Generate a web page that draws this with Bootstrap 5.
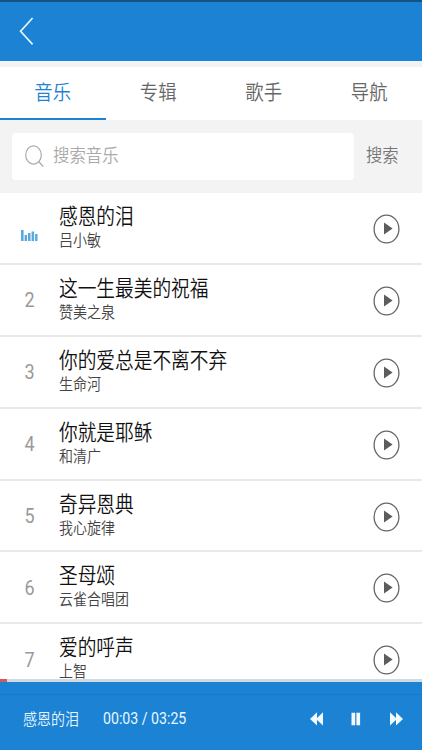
<!DOCTYPE html>
<html lang="zh-CN">
<head>
<meta charset="utf-8">
<meta name="viewport" content="width=device-width, initial-scale=1">
<title>音乐</title>
<link rel="stylesheet" href="https://cdn.jsdelivr.net/npm/bootstrap@5.3.0/dist/css/bootstrap.min.css">
<style>
:root { --blue: #1c82d3; --panel: #f3f3f3; }
body { font-family: Roboto, "Noto Sans CJK SC", sans-serif; font-weight: 350; background: #fff; color: #111; }
.screen { width: 422px; height: 750px; }
.tall { display: inline-block; transform: scaleY(1.13); white-space: nowrap; }
.topbar { height: 61px; background: var(--blue); border-top: 2px solid #14537f; padding-left: 19px; }
.tabs-wrap { background: var(--panel); padding-top: 6px; }
.tabs { height: 53px; background: #fff; }
.tabs .nav-link { height: 53px; padding: 0; line-height: 52px; font-size: 18.4px; font-weight: 350; color: #666; border-radius: 0; }
.tabs .nav-link.active { color: var(--blue); border-bottom: 2.5px solid var(--blue); }
.searchbar { height: 73px; background: var(--panel); padding: 0 12px; }
.searchbox { width: 342px; height: 47px; border-radius: 4px; color: #aaa; padding-left: 13px; font-size: 16.4px; }
.search-hint { margin-left: 9px; }
.search-go { font-size: 16.3px; color: #777; margin-left: 12px; }
.song { height: 71.9px; border-bottom: 2px solid #e9e9e9; }
.num { width: 59px; font-size: 18px; font-weight: 400; color: #999; }
.bars { margin-top: 12px; }
.song-title { font-size: 18.7px; line-height: 24px; color: #111; padding-top: 1px; }
.song-artist { font-size: 14px; line-height: 23px; color: #444; }
.play { margin-right: 22px; margin-top: 2px; }
.track { height: 3px; background: #d3dbe2; }
.track-fill { height: 3px; background: #d25a5c; }
.player { height: 68px; background: var(--blue); color: #e9f7ff; }
.player-top { height: 13px; border-bottom: 1px solid #1a79c5; }
.player-row { height: 48px; padding: 0 18px 0 23px; font-size: 14px; }
.player-time { margin-left: 24px; font-size: 14.15px; font-weight: 400; }
</style>
<script src="https://cdn.jsdelivr.net/npm/bootstrap@5.3.0/dist/js/bootstrap.bundle.min.js"></script>
</head>
<body>
<svg class="d-none">
  <symbol id="i-play" viewBox="0 0 27 30"><ellipse cx="13.5" cy="15" rx="12.4" ry="13.9" fill="none" stroke="#666" stroke-width="1.3"/><path d="M11 8.6v11.8l8.6-6z" fill="#5c5c5c"/></symbol>
</svg>
<div class="screen d-flex flex-column overflow-hidden" id="screen">
  <header class="topbar flex-shrink-0 d-flex align-items-center">
    <svg width="16" height="30" viewBox="0 0 16 30" fill="none" stroke="#e6f6ff" stroke-width="1.7"><path d="M13.6 1 1.6 14.3l12 13"/></svg>
  </header>
  <div class="tabs-wrap flex-shrink-0">
    <nav class="tabs nav nav-fill">
      <a class="nav-link col-3 active"><span class="tall">音乐</span></a>
      <a class="nav-link col-3"><span class="tall">专辑</span></a>
      <a class="nav-link col-3"><span class="tall">歌手</span></a>
      <a class="nav-link col-3"><span class="tall">导航</span></a>
    </nav>
  </div>
  <div class="searchbar flex-shrink-0 d-flex align-items-center">
    <div class="searchbox bg-white d-flex align-items-center">
      <svg width="19" height="24" viewBox="0 0 19 24" fill="none" stroke="#aaa" stroke-width="1.2"><ellipse cx="8.5" cy="10" rx="7.8" ry="9.1"/><path d="m13.6 16.5 4.6 5"/></svg>
      <span class="search-hint tall">搜索音乐</span>
    </div>
    <span class="search-go tall">搜索</span>
  </div>
  <main class="flex-grow-1 overflow-hidden" id="songs"></main>
  <footer class="flex-shrink-0">
    <div class="track"><div class="track-fill" style="width:1.65%"></div></div>
    <div class="player">
      <div class="player-top"></div>
      <div class="player-row d-flex align-items-center">
        <span class="tall">感恩的泪</span>
        <span class="tall player-time">00:03 / 03:25</span>
        <svg class="ms-auto" width="94" height="14" viewBox="0 0 94 14" fill="#f2faff">
          <path d="M0 7 7 .3V13.5zM6 7 13 .3V13.5z"/>
          <path d="M41.5.8h3.7v12.4h-3.7zM46.4.8h3.7v12.4h-3.7z"/>
          <path d="M80 .3 87 7 80 13.5zM86 .3 93 7 86 13.5z"/>
        </svg>
      </div>
    </div>
  </footer>
</div>
<script>
const songs = [["感恩的泪","吕小敏"],["这一生最美的祝福","赞美之泉"],["你的爱总是不离不弃","生命河"],["你就是耶稣","和清广"],["奇异恩典","我心旋律"],["圣母颂","云雀合唱团"],["爱的呼声","上智"]];
const bars = '<svg class="bars" width="17" height="12" viewBox="0 0 17 12" fill="#5aa9dc"><path d="M0 0h2.6v11H0zM3.6 5h2.4v6H3.6zM7 3h2.5v8H7zM10.6 1.5h2.5v9.5h-2.5zM14.1 4h2.4v7h-2.4z"/></svg>';
document.getElementById("songs").innerHTML = songs.map(([t, a], i) => `
  <div class="song d-flex align-items-center">
    <div class="num text-center">${i ? `<span class="tall">${i + 1}</span>` : bars}</div>
    <div class="flex-grow-1 d-flex flex-column align-items-start">
      <span class="song-title tall">${t}</span>
      <span class="song-artist tall">${a}</span>
    </div>
    <svg class="play" width="27" height="30"><use href="#i-play"/></svg>
  </div>`).join("");
</script>
</body>
</html>
